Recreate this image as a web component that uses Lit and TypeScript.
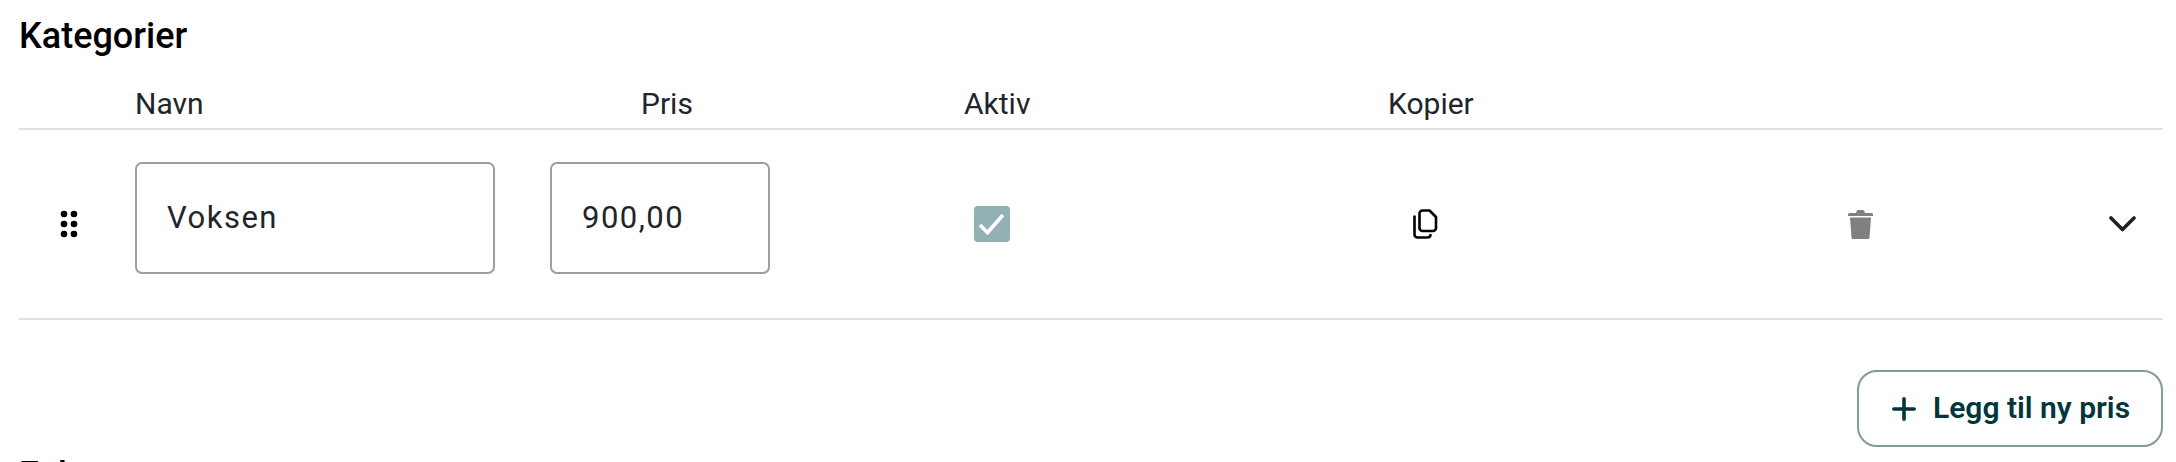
import { LitElement, html, css } from "lit";
import { customElement } from "lit/decorators.js";

@customElement("app-root")
export class AppRoot extends LitElement {
  static styles = css`
    :host { display: block; height: 462px; overflow: hidden; background: #fff; font-family: Roboto, sans-serif; color: #212529; }
    .page { padding: 0 13px 0 19px; }
    h2 { margin: 0; padding-top: 15px; height: 64px; box-sizing: border-box; font-size: 36px; line-height: 42px; font-weight: 500; color: #000; }
    .grid { display: grid; grid-template-columns: 116px 506px 323px 424px 1fr; }
    .head { height: 66px; box-sizing: border-box; border-bottom: 2px solid #e0e0e0; font-size: 30px; line-height: 36px; padding-top: 22px; }
    .row { height: 190px; box-sizing: border-box; border-bottom: 2px solid #e0e0e0; display: flex; align-items: center; }
    .drag { width: 116px; display: flex; padding-left: 41px; box-sizing: border-box; }
    .inp { box-sizing: border-box; height: 112px; margin-bottom: 12px; border: 2px solid #9e9e9e; border-radius: 7px; font-size: 31px; letter-spacing: 1.5px; line-height: 106px; padding: 1px 0 0 30px; }
    .name { width: 360px; }
    .price { width: 220px; margin-left: 55px; }
    .check { margin-left: 204px; width: 36px; height: 36px; display: block; }
    .copy { margin-left: 402px; }
    .trash { margin-left: 410px; }
    .chev { margin-left: 236px; }
    .actions { display: flex; justify-content: flex-end; padding-top: 50px; }
    button { box-sizing: border-box; width: 306px; height: 77px; background: #fff; border: 2px solid #84999c; border-radius: 20px; font: 600 30px Roboto, sans-serif; color: #02363d; display: flex; align-items: center; padding: 0 0 0 33px; gap: 17px; }
    button span { margin-bottom: 2px; }
    .next { margin-top: 7px; font-size: 36px; line-height: 42px; font-weight: 500; color: #000; }
  `;

  render() {
    return html`<div class="page">
      <h2>Kategorier</h2>
      <div class="grid head">
        <div></div><div>Navn</div><div>Pris</div><div>Aktiv</div><div>Kopier</div>
      </div>
      <div class="row">
        <div class="drag">
          <svg width="18" height="28" viewBox="0 0 18 28" fill="#000">
            <circle cx="4" cy="4" r="3.300"/><circle cx="14" cy="4" r="3.300"/>
            <circle cx="4" cy="14" r="3.300"/><circle cx="14" cy="14" r="3.300"/>
            <circle cx="4" cy="24" r="3.300"/><circle cx="14" cy="24" r="3.300"/>
          </svg>
        </div>
        <div class="inp name">Voksen</div>
        <div class="inp price">900,00</div>
        <svg class="check" viewBox="0 0 36 36">
          <rect width="36" height="36" rx="4" fill="#91b1b5"/>
          <path d="M6 19l7.500 7.500L29 9" fill="none" stroke="#fff" stroke-width="3.600"/>
        </svg>
        <svg class="copy" width="26" height="30" viewBox="0 0 26 30" fill="none" stroke="#000" stroke-width="2.600" stroke-linejoin="round" stroke-linecap="round">
          <path d="M10.500 1.500h7l6.500 6.500v11a3 3 0 0 1-3 3H10.500a3 3 0 0 1-3-3v-14.500a3 3 0 0 1 3-3z"/>
          <path d="M2.500 7.500v18a3 3 0 0 0 3 3h10a3 3 0 0 0 3-2.500"/>
        </svg>
        <svg class="trash" width="25" height="29" viewBox="0 0 25 29" fill="#808080">
          <path d="M0 4.500Q0 3 1.500 3H8Q8.500 0 10 0h5q1.500 0 2 3h6.500Q25 3 25 4.500V6H0z"/>
          <path d="M2 7.500h21l-1.500 20q-.1 1.500-1.500 1.500H5q-1.400 0-1.500-1.500z"/>
        </svg>
        <svg class="chev" width="27" height="16" viewBox="0 0 27 16" fill="none" stroke="#212121" stroke-width="3.600" stroke-linecap="round" stroke-linejoin="round">
          <path d="M2 2l11.500 11.500L25 2"/>
        </svg>
      </div>
      <div class="actions">
        <button>
          <svg width="24" height="24" viewBox="0 0 24 24" fill="none" stroke="#02363d" stroke-width="3.600" stroke-linecap="round"><path d="M12 1.800v20.400M1.800 12h20.400"/></svg>
          <span>Legg til ny pris</span>
        </button>
      </div>
      <div class="next">Felter</div>
    </div>`;
  }
}
